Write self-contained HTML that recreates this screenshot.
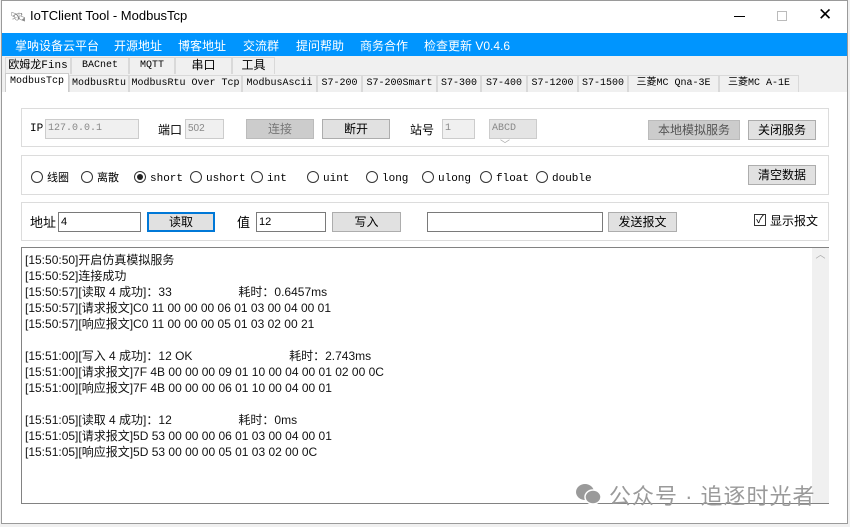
<!DOCTYPE html>
<html><head><meta charset="utf-8"><style>
*{margin:0;padding:0;box-sizing:border-box}
body{width:850px;height:527px;background:#f0f0f0;position:relative;overflow:hidden;font-family:"Liberation Sans","Noto Sans CJK SC",sans-serif;font-size:12px;color:#000}
.a{position:absolute}
.win{left:1px;top:0;width:847px;height:524px;background:#fff;border:1px solid #9a9a9a}
.menu{left:2px;top:33px;width:845px;height:23px;background:#0095fe;color:#fff;font-size:12px}
.menu span{position:absolute;top:4px}
.tabs{left:2px;top:56px;width:845px;height:36px;background:#f0f0f0}
.t{position:absolute;height:17px;border:1px solid #d9d9d9;border-bottom:none;background:#f0f0f0;font-family:"Liberation Mono","Noto Sans CJK SC",monospace;font-size:10px;text-align:center;line-height:16px;color:#000}
.page{left:2px;top:92px;width:845px;height:431px;background:#fff}
.pan{position:absolute;border:1px solid #dcdcdc;background:#fff}
.in{position:absolute;height:20px;border:1px solid #7a7a7a;background:#fff;font-size:11px;padding-left:2px;line-height:18px}
.dis{background:#f0f0f0;border-color:#ccc;color:#888;font-family:"Liberation Mono",monospace;font-size:10px}
.btn{position:absolute;height:20px;border:1px solid #adadad;background:#e1e1e1;text-align:center;line-height:18px;font-size:12px}
.lab{position:absolute;font-size:12px}
.r{position:absolute;top:171px;font-family:"Liberation Mono","Noto Sans CJK SC",monospace;font-size:11px;line-height:13px}
.r i{display:inline-block;width:12px;height:12px;border:1px solid #333;border-radius:50%;vertical-align:-2px;margin-right:4px;position:relative}
.log{left:21px;top:247px;width:808px;height:257px;border:1px solid #828282;background:#fff}
.log div{position:absolute;left:3px;font-size:12px;white-space:pre;color:#111}
</style></head><body>
<div class="a win"></div>
<div class="a" style="left:10px;top:9px;width:14px;height:14px;color:#888;font-size:13px">🛰</div>
<div class="a" style="left:30px;top:8px;font-size:13px">IoTClient Tool - ModbusTcp</div>
<div class="a" style="left:734px;top:16px;width:11px;height:1px;background:#000"></div>
<div class="a" style="left:777px;top:11px;width:10px;height:10px;border:1px solid #bbb"></div>
<div class="a" style="left:818px;top:5px;font-size:17px;font-weight:300">✕</div>
<div class="a menu">
<span style="left:13px">掌呐设备云平台</span><span style="left:112px">开源地址</span><span style="left:176px">博客地址</span><span style="left:241px">交流群</span><span style="left:294px">提问帮助</span><span style="left:358px">商务合作</span><span style="left:422px">检查更新 V0.4.6</span>
</div>
<div class="a tabs">
<div class="t" style="left:3px;top:1px;width:66px;font-size:11px">欧姆龙Fins</div>
<div class="t" style="left:69px;top:1px;width:58px">BACnet</div>
<div class="t" style="left:127px;top:1px;width:46px">MQTT</div>
<div class="t" style="left:173px;top:1px;width:57px;font-size:12px">串口</div>
<div class="t" style="left:230px;top:1px;width:43px;font-size:12px">工具</div>
<div class="t" style="left:3px;top:17px;width:64px;height:19px;background:#fff;border-color:#ccc">ModbusTcp</div>
<div class="t" style="left:67px;top:19px;width:60px">ModbusRtu</div>
<div class="t" style="left:127px;top:19px;width:113px">ModbusRtu Over Tcp</div>
<div class="t" style="left:240px;top:19px;width:75px">ModbusAscii</div>
<div class="t" style="left:315px;top:19px;width:45px">S7-200</div>
<div class="t" style="left:360px;top:19px;width:75px">S7-200Smart</div>
<div class="t" style="left:435px;top:19px;width:44px">S7-300</div>
<div class="t" style="left:479px;top:19px;width:46px">S7-400</div>
<div class="t" style="left:525px;top:19px;width:51px">S7-1200</div>
<div class="t" style="left:576px;top:19px;width:50px">S7-1500</div>
<div class="t" style="left:626px;top:19px;width:91px">三菱MC Qna-3E</div>
<div class="t" style="left:717px;top:19px;width:80px">三菱MC A-1E</div>
</div>
<div class="a page"></div>
<div class="pan" style="left:21px;top:108px;width:808px;height:39px"></div>
<div class="pan" style="left:21px;top:155px;width:808px;height:40px"></div>
<div class="pan" style="left:21px;top:202px;width:808px;height:39px"></div>

<div class="lab" style="left:30px;top:123px;font-family:'Liberation Mono',monospace;font-size:11px">IP</div>
<div class="in dis" style="left:45px;top:119px;width:94px">127.0.0.1</div>
<div class="lab" style="left:158px;top:121px">端口</div>
<div class="in dis" style="left:185px;top:119px;width:39px;font-family:'Liberation Sans'">502</div>
<div class="btn" style="left:246px;top:119px;width:68px;background:#ccc;color:#777;border-color:#bbb">连接</div>
<div class="btn" style="left:322px;top:119px;width:68px">断开</div>
<div class="lab" style="left:410px;top:121px">站号</div>
<div class="in dis" style="left:442px;top:119px;width:33px">1</div>
<div class="in dis" style="left:489px;top:119px;width:48px;background:#e4e4e4">ABCD <span style="color:#aaa;margin-left:8px">﹀</span></div>
<div class="btn" style="left:648px;top:120px;width:92px;background:#ccc;color:#555;border-color:#bbb">本地模拟服务</div>
<div class="btn" style="left:748px;top:120px;width:68px">关闭服务</div>

<div class="r" style="left:31px"><i></i>线圈</div>
<div class="r" style="left:81px"><i></i>离散</div>
<div class="r" style="left:134px"><i><b style="position:absolute;left:2px;top:2px;width:6px;height:6px;border-radius:50%;background:#222"></b></i>short</div>
<div class="r" style="left:190px"><i></i>ushort</div>
<div class="r" style="left:251px"><i></i>int</div>
<div class="r" style="left:307px"><i></i>uint</div>
<div class="r" style="left:366px"><i></i>long</div>
<div class="r" style="left:422px"><i></i>ulong</div>
<div class="r" style="left:480px"><i></i>float</div>
<div class="r" style="left:536px"><i></i>double</div>
<div class="btn" style="left:748px;top:165px;width:68px">清空数据</div>

<div class="lab" style="left:30px;top:212px;font-size:13px">地址</div>
<div class="in" style="left:58px;top:212px;width:83px">4</div>
<div class="btn" style="left:147px;top:212px;width:68px;border:2px solid #0078d7;line-height:16px">读取</div>
<div class="lab" style="left:237px;top:212px;font-size:13px">值</div>
<div class="in" style="left:256px;top:212px;width:70px">12</div>
<div class="btn" style="left:332px;top:212px;width:69px">写入</div>
<div class="in" style="left:427px;top:212px;width:176px"></div>
<div class="btn" style="left:608px;top:212px;width:69px">发送报文</div>
<div class="a" style="left:754px;top:214px;width:12px;height:12px;border:1px solid #333;font-size:11px;line-height:10px;text-align:center">✓</div>
<div class="lab" style="left:770px;top:212px">显示报文</div>

<div class="a log">
<div style="top:3px">[15:50:50]开启仿真模拟服务</div>
<div style="top:19px">[15:50:52]连接成功</div>
<div style="top:35px">[15:50:57][读取 4 成功]：33                    耗时：0.6457ms</div>
<div style="top:51px">[15:50:57][请求报文]C0 11 00 00 00 06 01 03 00 04 00 01</div>
<div style="top:67px">[15:50:57][响应报文]C0 11 00 00 00 05 01 03 02 00 21</div>
<div style="top:99px">[15:51:00][写入 4 成功]：12 OK                             耗时：2.743ms</div>
<div style="top:115px">[15:51:00][请求报文]7F 4B 00 00 00 09 01 10 00 04 00 01 02 00 0C</div>
<div style="top:131px">[15:51:00][响应报文]7F 4B 00 00 00 06 01 10 00 04 00 01</div>
<div style="top:163px">[15:51:05][读取 4 成功]：12                    耗时：0ms</div>
<div style="top:179px">[15:51:05][请求报文]5D 53 00 00 00 06 01 03 00 04 00 01</div>
<div style="top:195px">[15:51:05][响应报文]5D 53 00 00 00 05 01 03 02 00 0C</div>
<span class="a" style="left:790px;top:0;width:17px;height:255px;background:#f0f0f0;color:#aaa;font-size:10px;text-align:center;line-height:16px">︿</span>
</div>
<svg class="a" style="left:574px;top:482px" width="30" height="24" viewBox="0 0 30 24"><ellipse cx="11" cy="10" rx="9" ry="8" fill="#9a9a9a"/><ellipse cx="19" cy="15" rx="8" ry="7" fill="#9a9a9a" stroke="#fff" stroke-width="1.5"/></svg>
<div class="a" style="left:609px;top:479px;font-size:22px;color:#9a9a9a;letter-spacing:1px">公众号 · 追逐时光者</div>
</body></html>
